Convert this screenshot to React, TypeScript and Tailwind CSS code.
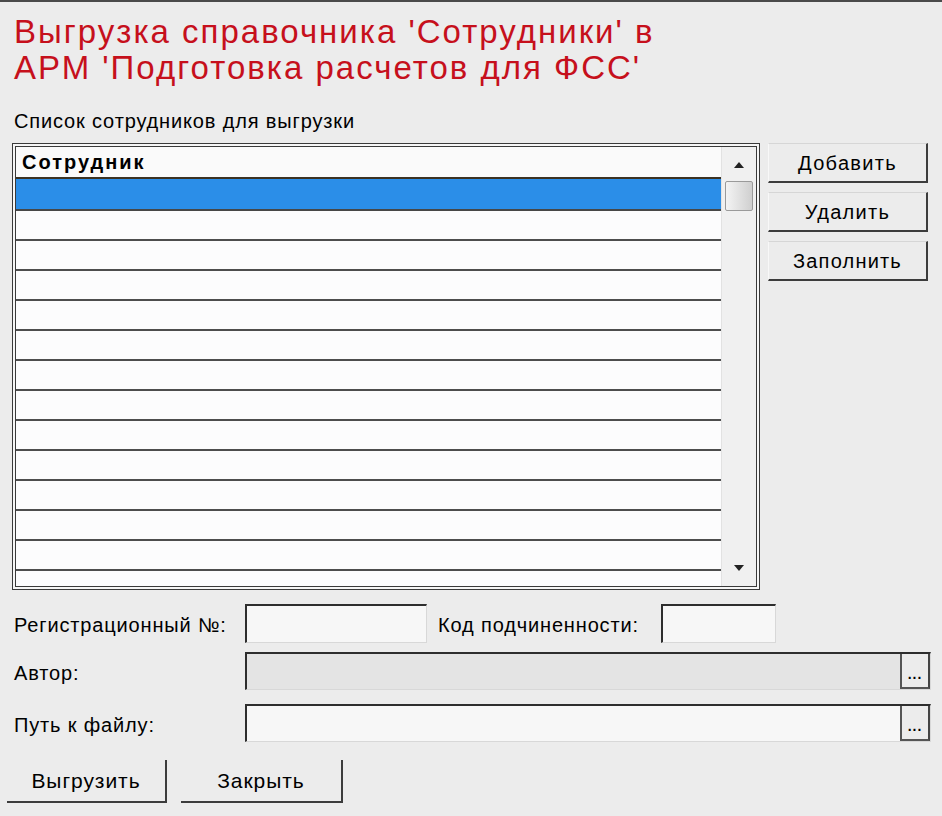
import React from 'react';

const rowCount = 13;

function RaisedButton({ label, className = '' }: { label: string; className?: string }) {
  return (
    <button
      className={
        'flex items-center justify-center bg-[#ececec] border-t border-l border-t-[#d6d6d6] border-l-[#f8f8f8] border-r-2 border-b-2 border-r-[#3c3c3c] border-b-[#3c3c3c] text-black ' +
        className
      }
    >
      {label}
    </button>
  );
}

function EllipsisField({ disabled }: { disabled?: boolean }) {
  return (
    <div className="flex h-[38px] w-[686px] border-t-2 border-l-2 border-t-[#2e2e2e] border-l-[#2e2e2e] border-b border-r border-b-[#d8d8d8] border-r-[#d8d8d8]">
      <div className={'flex-1 ' + (disabled ? 'bg-[#e4e4e4]' : 'bg-[#f7f7f7]')} />
      <button className="w-[30px] flex items-end justify-center pb-[6px] bg-[#ececec] border-l-2 border-l-[#555] border-r-2 border-r-[#444] border-b-2 border-b-[#555] text-[14px] font-bold leading-none tracking-[1px] text-black">
        ...
      </button>
    </div>
  );
}

export default function App() {
  return (
    <div className="w-[942px] h-[816px] overflow-hidden bg-[#ececec] border-t-2 border-[#4a4a4a] font-['Liberation_Sans',Arial,sans-serif] text-black">
      <div className="pl-[14px] pt-[12px]">
        <h1 className="text-[33px] leading-[36px] tracking-[2px] text-[#c6101c]">
          Выгрузка справочника 'Сотрудники' в
          <br />
          АРМ 'Подготовка расчетов для ФСС'
        </h1>
        <div className="mt-[24px] text-[20px] leading-[22px] tracking-[0.85px]">Список сотрудников для выгрузки</div>
      </div>

      <div className="flex items-start gap-[8px] pl-[12px] mt-[11px]">
        {/* employee list */}
        <div className="w-[748px] h-[447px] border border-[#3a3a3a] p-[2px] bg-[#f6f6f6]">
          <div className="flex h-full border border-[#3a3a3a] bg-white">
            <div className="flex-1 overflow-hidden">
              <div className="h-[32px] flex items-center pl-[6px] bg-[#fafafa] border-b-2 border-[#3b3222] text-[20px] font-bold tracking-[2px]">
                Сотрудник
              </div>
              <div className="h-[32px] bg-[#2b8ee8] border-b-2 border-[#474747]" />
              {Array.from({ length: rowCount }).map((_, i) => (
                <div key={i} className="h-[30px] bg-[#fcfcfd] border-b-2 border-[#4d4d4d]" />
              ))}
            </div>
            <div className="w-[35px] flex flex-col items-center bg-[#f0f0f0] border-l border-[#e2e2e2]">
              <svg width="12" height="8" viewBox="0 0 12 8" className="mt-[14px]">
                <path d="M6 1 L11 7 L1 7 Z" fill="#222" />
              </svg>
              <div className="mt-[12px] w-[28px] h-[30px] rounded-[2px] border border-[#9a9a9a] bg-gradient-to-r from-[#f4f4f4] to-[#cfcfcf]" />
              <div className="flex-1" />
              <svg width="12" height="8" viewBox="0 0 12 8" className="mb-[14px]">
                <path d="M1 1 L11 1 L6 7 Z" fill="#222" />
              </svg>
            </div>
          </div>
        </div>

        {/* side buttons */}
        <div className="flex flex-col gap-[9px]">
          <RaisedButton label="Добавить" className="w-[160px] h-[40px] text-[20px] tracking-[1.3px]" />
          <RaisedButton label="Удалить" className="w-[160px] h-[40px] text-[20px] tracking-[1.3px]" />
          <RaisedButton label="Заполнить" className="w-[160px] h-[40px] text-[20px] tracking-[1.2px]" />
        </div>
      </div>

      <div className="pl-[14px] mt-[14px] flex flex-col gap-[10px] text-[20px] tracking-[0.85px]">
        <div className="flex items-center h-[39px]">
          <span className="w-[231px] pt-[3px]">Регистрационный №:</span>
          <div className="w-[182px] h-[39px] bg-[#f7f7f7] border-t-2 border-l-2 border-t-[#2e2e2e] border-l-[#2e2e2e] border-b border-r border-b-[#d8d8d8] border-r-[#d8d8d8]" />
          <span className="ml-[11px] w-[223px] pt-[3px]">Код подчиненности:</span>
          <div className="w-[115px] h-[39px] bg-[#f7f7f7] border-t-2 border-l-2 border-t-[#2e2e2e] border-l-[#2e2e2e] border-b border-r border-b-[#d8d8d8] border-r-[#d8d8d8]" />
        </div>
        <div className="flex items-center h-[38px] -mt-[1px]">
          <span className="w-[231px] pt-[3px]">Автор:</span>
          <EllipsisField disabled />
        </div>
        <div className="flex items-center h-[38px] mt-[4px]">
          <span className="w-[231px] pt-[3px]">Путь к файлу:</span>
          <EllipsisField />
        </div>
      </div>

      <div className="flex gap-[14px] pl-[7px] mt-[18px]">
        <RaisedButton label="Выгрузить" className="w-[160px] h-[43px] border-t-0 border-l-0 text-[21px] tracking-[0.95px]" />
        <RaisedButton label="Закрыть" className="w-[162px] h-[43px] border-t-0 border-l-0 text-[21px] tracking-[0.95px]" />
      </div>
    </div>
  );
}
